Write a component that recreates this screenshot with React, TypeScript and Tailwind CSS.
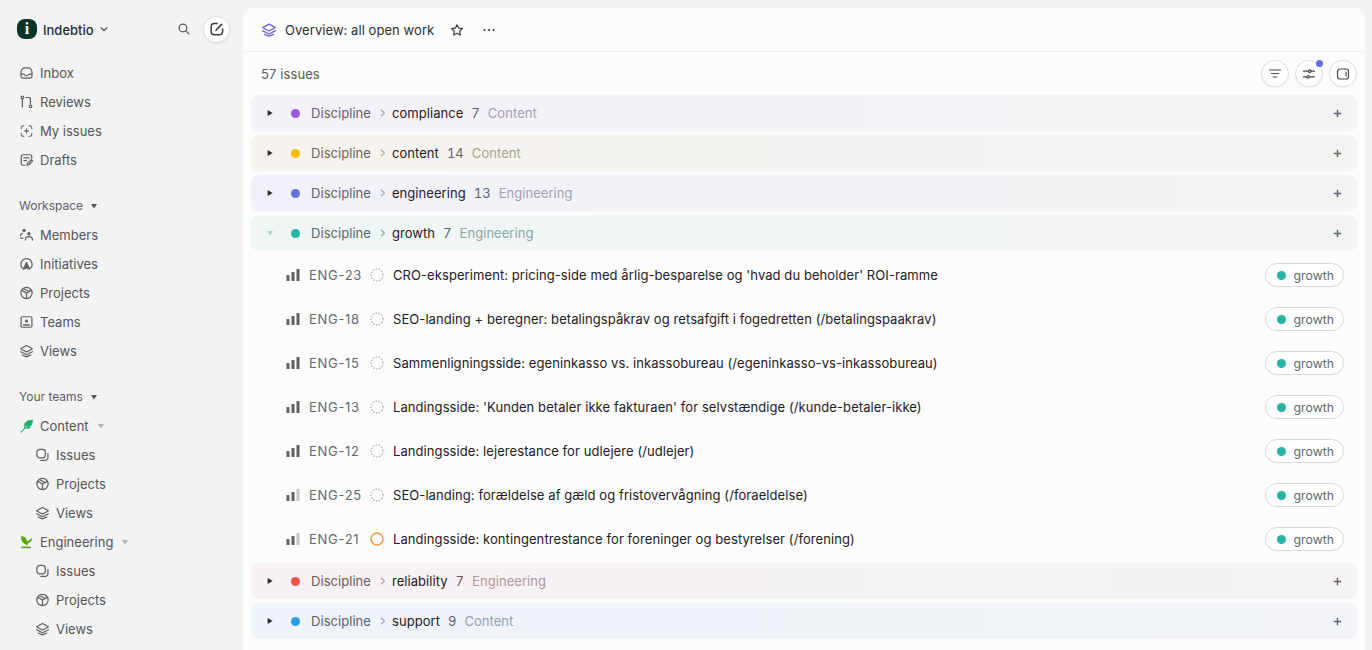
import React from "react";

type IP = { className?: string };
const S = ({ className, children, size = 16 }: IP & { children: React.ReactNode; size?: number }) => (
  <svg width={size} height={size} viewBox="0 0 16 16" fill="none" stroke="currentColor" strokeWidth="1.3" strokeLinecap="round" strokeLinejoin="round" className={className}>
    {children}
  </svg>
);
const Inbox = () => (<S><path d="M2.2 9V6.8a4.2 4.2 0 0 1 4.2-4.2h3.2a4.2 4.2 0 0 1 4.2 4.2V9" /><path d="M2.2 9.2h3.3c.4 1.2 1.3 1.8 2.5 1.8s2.1-.6 2.5-1.8h3.3v2.2a2 2 0 0 1-2 2H4.2a2 2 0 0 1-2-2z" /></S>);
const Reviews = () => (<S><circle cx="3.6" cy="3.2" r="1.4" /><path d="M3.6 4.8v8.4" /><path d="M7.5 3.2h2.7a2 2 0 0 1 2 2v5.2" /><circle cx="12.3" cy="12.6" r="1.4" /></S>);
const MyIssues = () => (<S><path d="M5.2 2.4H4.4a2 2 0 0 0-2 2v.8M10.8 2.4h.8a2 2 0 0 1 2 2v.8M5.2 13.6H4.4a2 2 0 0 1-2-2v-.8M10.8 13.6h.8a2 2 0 0 0 2-2v-.8" strokeDasharray="3 1.2" /><circle cx="8" cy="8" r="1.3" fill="currentColor" stroke="none" /><path d="M8 5.8v.3M8 9.9v.3M5.8 8h.3M9.9 8h.3" /></S>);
const Drafts = () => (<S><path d="M13.6 6.5V4.4a2 2 0 0 0-2-2H4.4a2 2 0 0 0-2 2v7.2a2 2 0 0 0 2 2h2.2" /><path d="M5.2 5.8h5.6M5.2 8.6h3" /><path d="M8.6 13.6l.4-1.9 4-4 1.4 1.4-4 4z" /></S>);
const Members = () => (<S><circle cx="5.4" cy="3.1" r="1.8" fill="currentColor" stroke="none" /><path d="M1.6 8.6c.2-1.1.8-2 1.7-2.4" /><circle cx="10.6" cy="6.6" r="1.8" fill="currentColor" stroke="none" /><path d="M6.8 13.4c0-2.3 1.6-3.6 3.8-3.6s3.8 1.3 3.8 3.6" /><path d="M1.6 11.4h2.4" /></S>);
const Initiatives = () => (<S><path d="M3.6 12.4a6 6 0 1 1 8.8 0" /><path d="M8 6.4l3.4 7.2-3.4-1.4-3.4 1.4z" fill="currentColor" /></S>);
const Projects = () => (<S><circle cx="8" cy="8" r="6" /><path d="M3 5.2L8 8l5-2.8M8 8v5.8M5.2 3.4l5.4 3" /></S>);
const Teams = () => (<S><rect x="2.2" y="2.4" width="11.6" height="11.2" rx="1.5" /><circle cx="8" cy="6.8" r="1.6" fill="currentColor" stroke="none" /><path d="M5 11.2h6" strokeWidth="1.6" /></S>);
const Views = ({ className }: IP) => (<S className={className}><path d="M8 2.2l6 3.1a.3.3 0 0 1 0 .5L8 9 2 5.8a.3.3 0 0 1 0-.5z" /><path d="M1.7 8.8L8 12l6.3-3.2" /><path d="M3.4 12.3L8 14.2l4.6-1.9" /></S>);
const Issues = () => (<S><rect x="2" y="2" width="9" height="9" rx="3" /><path d="M13.8 6.4v4.4a3 3 0 0 1-3 3H6.2" /></S>);
const Search = () => (<S size={14}><circle cx="6.8" cy="6.8" r="4.4" strokeWidth="1.4" /><path d="M10.2 10.2L13.6 13.6" strokeWidth="1.4" /></S>);
const Compose = () => (<S><path d="M8.2 2.6H5.2a3 3 0 0 0-3 3v5.2a3 3 0 0 0 3 3h5.4a3 3 0 0 0 3-3V8" strokeWidth="1.5" /><path d="M7 9.2L12.6 3.4" strokeWidth="1.6" /></S>);
const Chevron = ({ className }: IP) => (<svg width="10" height="10" viewBox="0 0 10 10" fill="none" stroke="currentColor" strokeWidth="1.2" strokeLinecap="round" strokeLinejoin="round" className={className}><path d="M2 3.7l3 2.8 3-2.8" /></svg>);
const Caret = ({ className }: IP) => (<svg width="8" height="8" viewBox="0 0 8 8" fill="currentColor" className={className}><path d="M1 2h6L4 6.6z" /></svg>);
const Right = () => (<svg width="8" height="8" viewBox="0 0 8 8" fill="currentColor"><path d="M1.6 1l5 3-5 3z" /></svg>);
const Gt = () => (<svg width="8" height="10" viewBox="0 0 8 10" fill="none" stroke="currentColor" strokeWidth="1.1" strokeLinecap="round" strokeLinejoin="round"><path d="M2.2 2L5.4 5 2.2 8" /></svg>);
const Plus = () => (<svg width="9" height="9" viewBox="0 0 9 9" fill="none" stroke="currentColor" strokeWidth="1.4"><path d="M4.5 .8v7.4M.8 4.5h7.4" /></svg>);

const Leaf = () => (
  <svg width="14" height="14" viewBox="0 0 14 14">
    <path d="M13.2 .8L7.6 1.6 4.4 4.4 4 9.6 8 5.6 5.6 9.8l3.8-.2L11 7.4H8.8l3-1.2z" fill="#1db26b" />
    <path d="M.8 13.4L5.6 8.4" stroke="#1db26b" strokeWidth="1.3" strokeDasharray="1.8 .7" />
  </svg>
);
const Plant = () => (
  <svg width="14" height="14" viewBox="0 0 14 14" fill="#56a80f">
    <path d="M1 1.2c2.6-.2 4.8.8 5.4 3.2l.6 2.2 2-1.4 3-2.2c.2 2-1 3.8-2.8 4.8l-1.6.8v1.6H6V9.2C3.2 8.8 1 5.4 1 1.2z" />
    <rect x="1.4" y="11.6" width="9.4" height="1.6" />
  </svg>
);

const NavItem = ({ icon, label, sub }: { icon: React.ReactNode; label: string; sub?: boolean }) => (
  <div className={`flex h-[29px] items-center gap-[6px] ${sub ? "pl-[35px]" : "pl-[19px]"} text-[#55565a]`}>
    <span className="flex w-[15px] justify-center text-[#5f6064]">{icon}</span>
    <span className="pt-[2px]">{label}</span>
  </div>
);

const Section = ({ label }: { label: string }) => (
  <div className="flex h-[29px] items-center gap-[7px] pl-[19px] text-[12px] text-[#5f6064]">
    <span>{label}</span>
    <Caret className="text-[#55565a]" />
  </div>
);

const TeamHead = ({ icon, label }: { icon: React.ReactNode; label: string }) => (
  <div className="flex h-[29px] items-center gap-[6px] pl-[19px] text-[#55565a]">
    <span className="flex w-[15px] justify-center">{icon}</span>
    <span className="pt-[2px]">{label}</span>
    <Caret className="ml-[2px] text-[#b4b4b6]" />
  </div>
);

const Sidebar = () => (
  <aside className="flex w-[243px] shrink-0 flex-col">
    <div className="flex h-[58px] items-center pl-[17px] pr-[13px]">
      <span className="flex h-5 w-5 items-center justify-center rounded-[8px] bg-[#0b3326] font-['Liberation_Serif',serif] text-[16px] font-bold text-white">i</span>
      <span className="ml-[6px] pt-[4px] text-[13px] font-medium text-[#2b2c30]">Indebtio</span>
      <Chevron className="ml-[5px] text-[#55565a]" />
      <span className="ml-auto mr-[12px] flex text-[#55565a]"><Search /></span>
      <span className="flex h-[27px] w-[27px] items-center justify-center rounded-full border border-[#e2e2e3] bg-white text-[#3a3b3f] shadow-[0_1px_2px_rgba(0,0,0,0.08)]"><Compose /></span>
    </div>
    <NavItem icon={<Inbox />} label="Inbox" />
    <NavItem icon={<Reviews />} label="Reviews" />
    <NavItem icon={<MyIssues />} label="My issues" />
    <NavItem icon={<Drafts />} label="Drafts" />
    <div className="h-[17px]" />
    <Section label="Workspace" />
    <NavItem icon={<Members />} label="Members" />
    <NavItem icon={<Initiatives />} label="Initiatives" />
    <NavItem icon={<Projects />} label="Projects" />
    <NavItem icon={<Teams />} label="Teams" />
    <NavItem icon={<Views />} label="Views" />
    <div className="h-[17px]" />
    <Section label="Your teams" />
    <TeamHead icon={<Leaf />} label="Content" />
    <NavItem sub icon={<Issues />} label="Issues" />
    <NavItem sub icon={<Projects />} label="Projects" />
    <NavItem sub icon={<Views />} label="Views" />
    <TeamHead icon={<Plant />} label="Engineering" />
    <NavItem sub icon={<Issues />} label="Issues" />
    <NavItem sub icon={<Projects />} label="Projects" />
    <NavItem sub icon={<Views />} label="Views" />
  </aside>
);

type GroupP = { name: string; count: number; team: string; dot: string; bg: string; label: string; sub: string; open?: boolean };
const Group = ({ name, count, team, dot, bg, label, sub, open }: GroupP) => (
  <div className={`flex h-9 shrink-0 items-center rounded-[8px] bg-linear-to-r pl-[14px] pr-[15px] tracking-[0.05px] ${bg}`}>
    <span className={`flex w-[9px] justify-center ${open ? "text-[#b5d3cc]" : "text-[#2b2c30]"}`}>{open ? <Caret /> : <Right />}</span>
    <span className={`ml-[17px] h-[9px] w-[9px] rounded-full ${dot}`} />
    <span className={`ml-[11px] pt-[2px] ${label}`}>Discipline</span>
    <span className={`ml-[8px] flex ${sub}`}><Gt /></span>
    <span className="ml-[5px] pt-[2px] text-[#1f2023]">{name}</span>
    <span className={`ml-[8px] pt-[2px] tabular-nums ${label}`}>{count}</span>
    <span className={`ml-[8px] pt-[2px] ${sub}`}>{team}</span>
    <span className={`ml-auto flex ${label}`}><Plus /></span>
  </div>
);

const Bars = ({ low }: { low?: boolean }) => (
  <svg width="14" height="14" viewBox="0 0 14 14" className="shrink-0">
    <rect x="0.5" y="7" width="3" height="6" rx="0.6" fill="#5f6064" />
    <rect x="5.5" y="4" width="3" height="9" rx="0.6" fill="#5f6064" />
    <rect x="10.5" y="1" width="3" height="12" rx="0.6" fill={low ? "#c6c6c8" : "#5f6064"} />
  </svg>
);

const Row = ({ id, title, low, todo }: { id: string; title: string; low?: boolean; todo?: boolean }) => (
  <div className="flex h-11 items-center pl-[35px] pr-[13px]">
    <Bars low={low} />
    <span className="ml-[9px] w-[52px] whitespace-nowrap pt-[2px] text-[#66676b] tracking-[0.7px]">{id}</span>
    <svg width="14" height="14" viewBox="0 0 14 14" fill="none" className="ml-[9px] shrink-0">
      {todo ? (
        <circle cx="7" cy="7" r="6" stroke="#ee9a43" strokeWidth="1.5" />
      ) : (
        <circle cx="7" cy="7" r="6" stroke="#a9a9ab" strokeWidth="1.2" strokeDasharray="1.4 1.5" />
      )}
    </svg>
    <span className="ml-[9px] pt-[2px] tracking-[0.08px] text-[#1f2023]">{title}</span>
    <span className="ml-auto flex h-6 items-center gap-[8px] rounded-full border border-[#d9d9db] bg-white pl-[11px] pr-[9px] text-[12.3px] text-[#66676b]">
      <span className="h-[9px] w-[9px] rounded-full bg-[#26b5a0]" />
      <span className="pt-[2px]">growth</span>
    </span>
  </div>
);

const RoundBtn = ({ children, dot }: { children: React.ReactNode; dot?: boolean }) => (
  <span className="relative flex h-[27px] w-[28px] items-center justify-center rounded-full border border-[#dfdfe0] bg-white text-[#46474b] shadow-[0_1px_1px_rgba(0,0,0,0.05)]">
    {children}
    {dot && <span className="absolute -top-[1px] right-[-1px] h-[7px] w-[7px] rounded-full bg-[#6570dc]" />}
  </span>
);

const groupsTop: GroupP[] = [
  { name: "compliance", count: 7, team: "Content", dot: "bg-[#9c56e0]", bg: "from-[#f4f1f9] to-[#f4f4f5]", label: "text-[#64606f]", sub: "text-[#a49fb3]" },
  { name: "content", count: 14, team: "Content", dot: "bg-[#f2bd0a]", bg: "from-[#f6f3ee] to-[#f4f4f5]", label: "text-[#6a645a]", sub: "text-[#ada292]" },
  { name: "engineering", count: 13, team: "Engineering", dot: "bg-[#6570dc]", bg: "from-[#f1f2f9] to-[#f4f4f5]", label: "text-[#5f6170]", sub: "text-[#9fa1b3]" },
  { name: "growth", count: 7, team: "Engineering", dot: "bg-[#26b5a0]", bg: "from-[#eff6f5] to-[#f4f4f5]", label: "text-[#55686a]", sub: "text-[#8aa8a4]", open: true },
];
const rows = [
  { id: "ENG-23", title: "CRO-eksperiment: pricing-side med årlig-besparelse og 'hvad du beholder' ROI-ramme" },
  { id: "ENG-18", title: "SEO-landing + beregner: betalingspåkrav og retsafgift i fogedretten (/betalingspaakrav)" },
  { id: "ENG-15", title: "Sammenligningsside: egeninkasso vs. inkassobureau (/egeninkasso-vs-inkassobureau)" },
  { id: "ENG-13", title: "Landingsside: 'Kunden betaler ikke fakturaen' for selvstændige (/kunde-betaler-ikke)" },
  { id: "ENG-12", title: "Landingsside: lejerestance for udlejere (/udlejer)" },
  { id: "ENG-25", title: "SEO-landing: forældelse af gæld og fristovervågning (/foraeldelse)", low: true },
  { id: "ENG-21", title: "Landingsside: kontingentrestance for foreninger og bestyrelser (/forening)", low: true, todo: true },
];

export default function App() {
  return (
    <div className="flex h-[650px] w-[1372px] overflow-hidden bg-[#f3f3f3] font-['Inter',sans-serif] text-[13px]">
      <Sidebar />
      <main className="mt-2 mr-[7px] flex min-w-0 flex-1 flex-col rounded-t-[10px] bg-[#fcfcfc]">
        <header className="flex h-[44px] shrink-0 items-center border-b border-[#f0f0f0] pl-[18px]">
          <span className="text-[#6a5fd8]"><Views /></span>
          <span className="ml-[8px] pt-[2px] tracking-[0.06px] text-[#2f3034]">Overview: all open work</span>
          <svg width="14" height="14" viewBox="0 0 24 24" fill="none" stroke="#3a3b3f" strokeWidth="2" strokeLinejoin="round" className="ml-[16px]"><path d="M12 2.8l2.9 5.9 6.5.9-4.7 4.6 1.1 6.5L12 17.6l-5.8 3.1 1.1-6.5L2.6 9.6l6.5-.9z" /></svg>
          <svg width="14" height="14" viewBox="0 0 14 14" fill="#3a3b3f" className="ml-[18px]"><circle cx="2.5" cy="7" r="1.1" /><circle cx="7" cy="7" r="1.1" /><circle cx="11.5" cy="7" r="1.1" /></svg>
        </header>
        <div className="flex h-[43px] shrink-0 items-center pl-[18px] pr-[8px] text-[#5a5b5f]">
          <span className="pt-[2px] tracking-[0.1px]">57 issues</span>
          <div className="ml-auto flex gap-[6px]">
            <RoundBtn><svg width="14" height="14" viewBox="0 0 14 14" stroke="currentColor" strokeWidth="1.2" strokeLinecap="round"><path d="M1.5 3h11M3.5 6.5h7M5.2 10h3.6" /></svg></RoundBtn>
            <RoundBtn dot><svg width="14" height="14" viewBox="0 0 14 14" fill="none" stroke="currentColor" strokeWidth="1.2" strokeLinecap="round"><path d="M1.5 4.2h5M9.2 4.2h3.3M1.5 9.8h3.3M7.4 9.8h5.1" /><circle cx="7.8" cy="4.2" r="1.3" /><circle cx="6.1" cy="9.8" r="1.3" /></svg></RoundBtn>
            <RoundBtn><svg width="14" height="14" viewBox="0 0 14 14" fill="none" stroke="currentColor" strokeWidth="1.2"><rect x="1.5" y="2" width="11" height="10" rx="2.6" /><path d="M10 5v4" strokeLinecap="round" /></svg></RoundBtn>
          </div>
        </div>
        <div className="flex flex-col px-2">
          <div className="flex flex-col gap-1">
            {groupsTop.map((g) => <Group key={g.name} {...g} />)}
          </div>
          <div className="my-[2px] flex flex-col">
            {rows.map((r) => <Row key={r.id} {...r} />)}
          </div>
          <div className="flex flex-col gap-1">
            <Group name="reliability" count={7} team="Engineering" dot="bg-[#ef5350]" bg="from-[#f7f1f2] to-[#f4f4f5]" label="text-[#6d5a5e]" sub="text-[#b0979c]" />
            <Group name="support" count={9} team="Content" dot="bg-[#2e9be6]" bg="from-[#eff3fa] to-[#f2f4f8]" label="text-[#596272]" sub="text-[#94a0b5]" />
          </div>
        </div>
      </main>
    </div>
  );
}
